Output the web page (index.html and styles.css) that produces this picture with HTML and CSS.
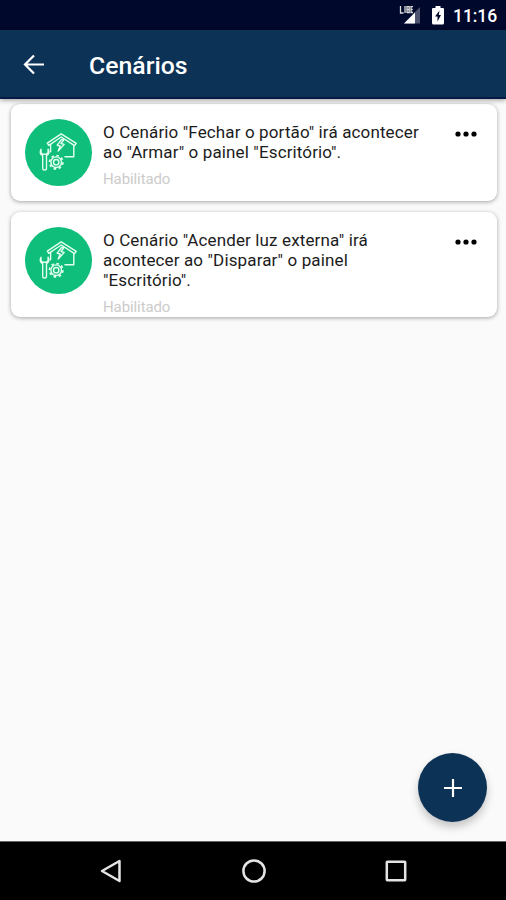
FILE: index.html
```html
<!DOCTYPE html>
<html lang="pt-BR">
<head>
<meta charset="utf-8">
<title>Cenários</title>
<link rel="stylesheet" href="styles.css">
</head>
<body>
<svg class="defs" aria-hidden="true">
  <symbol id="scene" viewBox="0 0 67 67">
    <g fill="none" stroke="currentColor" stroke-width="1.4" stroke-linejoin="round" stroke-linecap="round">
      <path d="M36.2 14.8 22.3 24.2l1.5 2.2L36.2 18l13.3 8.7 1.7-2.3z"/>
      <path d="M25.6 25.5v7.2M48.8 27v10.7H40"/>
      <path d="m36.500 20.500-4.300 5.700 3 .8-2 5 6-6.600-3.200-.9 3-4z"/>
      <path d="M16 30.200c-1.400 2.700-.5 5.200 1.700 6.400v13c0 2 3.800 2 3.800 0v-13c2.300-1.300 3-3.900 1.600-6.400v3.700l-1.900 1.300h-3.200L16 33.800z"/>
      <circle cx="31.200" cy="43.200" r="2.700"/>
      <circle cx="31.200" cy="43.200" r="5.300"/>
      <circle cx="31.200" cy="43.200" r="6.700" stroke-width="1.700" stroke-linecap="butt" stroke-dasharray="2.600 2.662"/>
    </g>
  </symbol>
</svg>
<div class="screen">
  <div class="status">
    <svg class="signal" width="22" height="20" viewBox="0 0 22 20">
      <path d="M21 1v16.500H5z" fill="#50536f"/>
      <path d="M16 6.500v11H5z" fill="#fff"/>
      <path d="M1.500 0v7h3M6 0v7M8 7V.5h2.200v6H8M8 3.500h2M14 .5h-2v6h2M12 3.500h1.700" fill="none" stroke="#ddd" stroke-width="1.300"/>
    </svg>
    <svg class="battery" width="12" height="19" viewBox="0 0 12 19">
      <path d="M3.500 0h5v2H11q1 0 1 1v14q0 1.500-1.500 1.500h-9Q0 18.500 0 17V3q0-1 1-1h2.500z" fill="#fff"/>
      <path d="M7.500 4.500 3 10.500h2.500v5L9 9H6.800z" fill="#00082c"/>
    </svg>
    <span class="clock">11:16</span>
  </div>
  <header class="bar">
    <svg width="22" height="22" viewBox="0 0 22 22"><path d="M21 10.500H2.500M11 1.500l-9 9 9 9" fill="none" stroke="#fff" stroke-width="2.200"/></svg>
    <h1>Cenários</h1>
  </header>
  <main class="list">
    <article class="card">
      <div class="avatar"><svg width="67" height="67"><use href="#scene"/></svg></div>
      <div class="body">
        <p class="text">O Cenário "Fechar o portão" irá acontecer<br>ao "Armar" o painel "Escritório".</p>
        <p class="state">Habilitado</p>
      </div>
      <svg class="more" width="22" height="6" viewBox="0 0 22 6"><circle cx="3" cy="3" r="2.600"/><circle cx="11" cy="3" r="2.600"/><circle cx="19" cy="3" r="2.600"/></svg>
    </article>
    <article class="card tall">
      <div class="avatar"><svg width="67" height="67"><use href="#scene"/></svg></div>
      <div class="body">
        <p class="text">O Cenário "Acender luz externa" irá<br>acontecer ao "Disparar" o painel<br>"Escritório".</p>
        <p class="state">Habilitado</p>
      </div>
      <svg class="more" width="22" height="6" viewBox="0 0 22 6"><circle cx="3" cy="3" r="2.600"/><circle cx="11" cy="3" r="2.600"/><circle cx="19" cy="3" r="2.600"/></svg>
    </article>
    <button class="fab" aria-label="Adicionar"><svg width="18" height="18" viewBox="0 0 18 18"><path d="M9 0v18M0 9h18" stroke="#fff" stroke-width="2.200"/></svg></button>
  </main>
  <nav class="nav">
    <svg width="24" height="26" viewBox="0 0 24 26"><path d="M20.500 3v20L3 13z"/></svg>
    <svg width="26" height="26" viewBox="0 0 26 26"><circle cx="13" cy="13" r="10.600"/></svg>
    <svg width="24" height="24" viewBox="0 0 24 24"><rect x="2.800" y="2.800" width="18.400" height="18.400" rx=".5"/></svg>
  </nav>
</div>
</body>
</html>
```
FILE: styles.css
```css
* { box-sizing: border-box; }
body { margin: 0; font-family: Roboto, "Liberation Sans", sans-serif; background: #fafafa; }
p, h1 { margin: 0; }
svg { display: block; flex: none; }
.defs { position: absolute; width: 0; height: 0; }
.screen { width: 506px; height: 900px; display: flex; flex-direction: column; overflow: hidden; }
.status { height: 30px; flex: none; background: #00082c; color: #fff; display: flex; align-items: flex-start; justify-content: flex-end; padding: 6px 9px 0 0; }
.battery { margin: 0 9px 0 11px; }
.clock { font-size: 17.500px; font-weight: 500; line-height: 20px; letter-spacing: -.1px; }
.bar { height: 69px; flex: none; background: #0c3256; color: #fff; display: flex; align-items: center; padding: 2px 0 0 23px; border-bottom: 2px solid #071a43; box-shadow: 0 1px 5px rgba(0,0,0,.4); z-index: 1; }
.bar h1 { margin: 2px 0 0 44px; font-size: 24.800px; font-weight: 500; line-height: 30px; }
.list { position: relative; flex: 1; padding: 5px 9px 0 11px; display: flex; flex-direction: column; gap: 11px; }
.card { height: 97px; flex: none; background: #fff; border-radius: 9px; display: flex; align-items: flex-start; padding: 15px 20px 0 14px; box-shadow: 0 1px 4px rgba(0,0,0,.35); overflow: hidden; }
.card.tall { height: 105px; }
.avatar { width: 67px; height: 67px; border-radius: 50%; background: #10be7b; color: #e4fff0; }
.body { margin-left: 11px; padding-top: 3px; flex: 1; }
.text { font-size: 17px; line-height: 20px; letter-spacing: .13px; color: #1c1c1c; white-space: nowrap; }
.state { margin-top: 8px; font-size: 15px; line-height: 18px; letter-spacing: -.1px; color: #ccc; }
.tall .state { margin-top: 8px; }
.more { margin-top: 12px; fill: #000; }
.fab { position: absolute; right: 19px; bottom: 19px; width: 69px; height: 69px; padding: 0; border: 0; border-radius: 50%; background: #0c3256; display: flex; align-items: center; justify-content: center; box-shadow: 0 5px 9px rgba(0,0,0,.22); }
.nav { height: 59px; flex: none; background: #000; border-top: 1px solid #666; display: flex; align-items: center; justify-content: space-between; padding: 0 98px 0 99px; }
.nav svg { fill: none; stroke: #e4e4e4; stroke-width: 2.500; stroke-linejoin: round; }
```
